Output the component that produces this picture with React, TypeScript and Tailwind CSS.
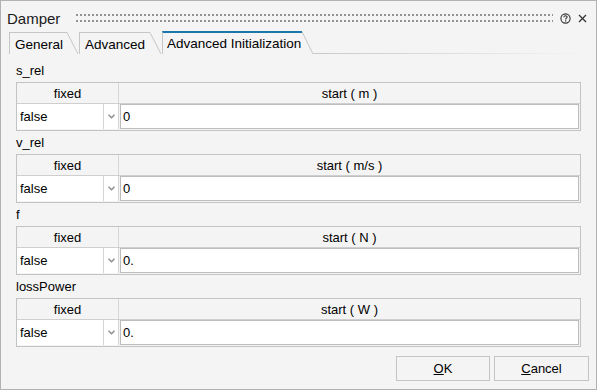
import React from "react";

const font = { fontFamily: '"Liberation Sans", Arial, sans-serif' };

function Slant({ h, color = "#c6c6c6" }: { h: number; color?: string }) {
  return (
    <svg width="11" height={h} className="block shrink-0" viewBox={`0 0 11 ${h}`}>
      <line x1="0" y1="0.5" x2="11" y2={h} stroke={color} strokeWidth="1" />
    </svg>
  );
}

function Section({ label, unit, value }: { label: string; unit: string; value: string }) {
  return (
    <div className="flex flex-col">
      <div className="h-[16px] text-[13px] leading-[16px] text-black">{label}</div>
      <div className="mt-[3px] w-[565px] h-[49px] border border-[#c3c3c3] flex flex-col">
        <div className="h-[21px] flex border-b border-[#cfcfcf] text-[13px] text-black">
          <div className="w-[102px] border-r border-[#d6d6d6] flex items-center justify-center pt-[1px]">fixed</div>
          <div className="flex-1 flex items-center justify-center pt-[1px]">start ( {unit} )</div>
        </div>
        <div className="h-[26px] flex pr-[1px] pb-[1px]">
          <div className="w-[101px] bg-white flex">
            <div className="flex-1 flex items-center pl-[3px] text-[13px] text-black">false</div>
            <div className="w-[15px] border-l border-[#d4d4d4] flex items-center justify-center">
              <svg width="7" height="5" viewBox="0 0 7 5">
                <polyline points="0.5,0.8 3.5,3.8 6.5,0.8" fill="none" stroke="#8a8a8a" strokeWidth="1.3" />
              </svg>
            </div>
          </div>
          <div className="w-[1px] bg-[#d4d4d4]" />
          <div className="flex-1 ml-[1px] bg-white border border-[#bdbdbd] flex items-center pl-[2px] text-[13px] text-black">
            {value}
          </div>
        </div>
      </div>
    </div>
  );
}

export default function App() {
  return (
    <div
      style={font}
      className="w-[597px] h-[390px] bg-[#f4f4f4] border border-[#b2b2b2] flex flex-col overflow-hidden"
    >
      {/* Title bar */}
      <div className="h-[30px] pt-[4px] flex items-center">
        <div className="pl-[6px] text-[15px] leading-[17px] text-[#1a1a1a]">Damper</div>
        <svg width="477" height="8" className="ml-[16px] block">
          <defs>
            <pattern id="dots" width="4" height="6" patternUnits="userSpaceOnUse">
              <rect x="0" y="0" width="2" height="2" fill="#939393" />
            </pattern>
          </defs>
          <rect x="0" y="0" width="477" height="8" fill="url(#dots)" />
        </svg>
        <svg width="11" height="11" viewBox="0 0 11 11" className="ml-[7px] block">
          <circle cx="5.5" cy="5.5" r="4.6" fill="none" stroke="#333" strokeWidth="1.1" />
          <path d="M3.9 4.3 C3.9 3.2 4.7 2.8 5.5 2.8 C6.4 2.8 7.1 3.3 7.1 4.1 C7.1 5.1 5.6 5.2 5.6 6.4" fill="none" stroke="#333" strokeWidth="1.1" />
          <rect x="5" y="7.3" width="1.2" height="1.2" fill="#333" />
        </svg>
        <svg width="9" height="9" viewBox="0 0 9 9" className="ml-[7px] block">
          <line x1="1" y1="1" x2="8" y2="8" stroke="#333" strokeWidth="1.2" />
          <line x1="8" y1="1" x2="1" y2="8" stroke="#333" strokeWidth="1.2" />
        </svg>
      </div>

      {/* Tabs */}
      <div className="h-[23px] flex items-end pl-[8px] text-[13.5px] text-black">
        <div className="flex h-[22px]">
          <div className="w-[58px] h-full border-l border-t border-[#c6c6c6] pl-[5px] pt-[3px] flex items-center">General</div>
          <Slant h={22} />
        </div>
        <div className="flex h-[22px] ml-[1px]">
          <div className="w-[71px] h-full border-l border-t border-[#c6c6c6] pl-[5px] pt-[3px] flex items-center">Advanced</div>
          <Slant h={22} />
        </div>
        <div className="flex h-[23px] ml-[1px]">
          <div className="w-[140px] h-full border-l border-[#c6c6c6] border-t-2 border-t-[#1b76ab] pl-[4px] pt-[1px] flex items-center whitespace-nowrap">
            Advanced Initialization
          </div>
          <Slant h={23} />
        </div>
        <div className="flex-1 h-[1px] mr-[10px] bg-[linear-gradient(to_right,#c9c9c9,#f4f4f4)]" />
      </div>

      {/* Content */}
      <div className="pl-[15px] pt-[9px] flex flex-col gap-[4px]">
        <Section label="s_rel" unit="m" value="0" />
        <Section label="v_rel" unit="m/s" value="0" />
        <Section label="f" unit="N" value="0." />
        <Section label="lossPower" unit="W" value="0." />
      </div>

      {/* Buttons */}
      <div className="mt-[9px] flex justify-end pr-[7px] gap-[4px] text-[13px] text-black">
        <button className="w-[94px] h-[25px] border border-[#c4c4c4] bg-[#f4f4f4] flex items-center justify-center">
          <span><span className="underline">O</span>K</span>
        </button>
        <button className="w-[95px] h-[25px] border border-[#c4c4c4] bg-[#f4f4f4] flex items-center justify-center">
          <span><span className="underline">C</span>ancel</span>
        </button>
      </div>
    </div>
  );
}
